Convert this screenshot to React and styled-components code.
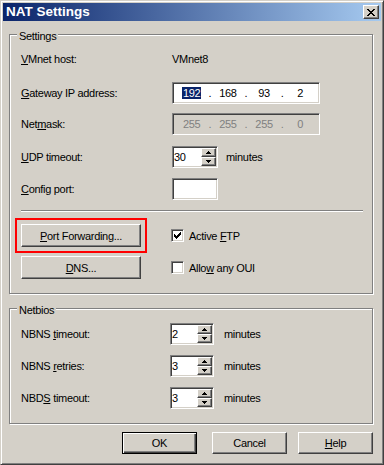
import React from "react";
import styled, { createGlobalStyle, css } from "styled-components";

const Global = createGlobalStyle`
  html, body { margin: 0; padding: 0; background: #D4D0C8; }
  * { box-sizing: border-box; }
`;

const raised = css`
  background: #D4D0C8;
  border: 1px solid;
  border-color: #fff #404040 #404040 #fff;
  box-shadow: inset -1px -1px #808080, inset 1px 1px #D4D0C8;
`;

const sunken = css`
  border: 1px solid;
  border-color: #808080 #fff #fff #808080;
  box-shadow: inset 1px 1px #404040, inset -1px -1px #D4D0C8;
`;

const Win = styled.div`
  width: 384px;
  height: 465px;
  background: #D4D0C8;
  border: 1px solid;
  border-color: #D4D0C8 #404040 #404040 #D4D0C8;
  box-shadow: inset 1px 1px #fff, inset -1px -1px #808080;
  padding: 2px;
  display: flex;
  flex-direction: column;
  font-family: "Liberation Sans", Arial, sans-serif;
  font-size: 11px;
  letter-spacing: -0.3px;
  color: #000;
`;

const TitleBar = styled.div`
  flex: none;
  height: 18px;
  display: flex;
  align-items: center;
  justify-content: space-between;
  padding: 0 2px 0 3px;
  background: linear-gradient(to right, #0A246A, #A6CAF0);
`;

const Title = styled.span`
  color: #fff;
  font-weight: bold;
  font-size: 13.5px;
  letter-spacing: 0;
  line-height: 18px;
`;

const CloseBtn = styled.div`
  ${raised};
  width: 16px;
  height: 14px;
  display: flex;
  align-items: center;
  justify-content: center;
`;

const Body = styled.div`
  flex: 1;
  display: flex;
  flex-direction: column;
  padding: 0 8px 0 6px;
`;

const Group = styled.fieldset`
  margin: ${(p) => p.$mt}px 0 0;
  padding: ${(p) => p.$pt}px 9px 14px 11px;
  min-width: 0;
  border: 1px solid #808080;
  box-shadow: inset 1px 1px #fff, 1px 1px #fff;
`;

const Legend = styled.legend`
  margin-left: -4px;
  padding: 4px 2px 0;
  line-height: 13px;
  background: #D4D0C8;
`;

const FormGrid = styled.div`
  display: grid;
  grid-template-columns: ${(p) => p.$labelW}px 1fr;
  grid-template-rows: ${(p) => p.$rows};
  align-items: start;
`;

const Label = styled.div`
  height: 22px;
  line-height: 22px;
  white-space: nowrap;
`;

const Value = styled.div`
  height: 22px;
  line-height: 22px;
`;

const U = styled.span`
  text-decoration: underline;
  text-underline-offset: 1px;
`;

const IPBox = styled.div`
  ${sunken};
  width: 148px;
  height: 22px;
  padding: 0 2px;
  background: ${(p) => (p.$disabled ? "#D4D0C8" : "#fff")};
  color: ${(p) => (p.$disabled ? "#808080" : "#000")};
  display: grid;
  grid-template-columns: 1fr auto 1fr auto 1fr auto 1fr;
  align-items: center;
  line-height: 18px;
`;

const Octet = styled.span`
  text-align: center;
`;

const Sel = styled.span`
  background: #0A246A;
  color: #fff;
  padding: 0 1px;
  line-height: 12px;
  display: inline-block;
`;

const SpinRow = styled.div`
  display: flex;
  align-items: center;
  gap: ${(p) => p.$gap}px;
  height: 22px;
`;

const SpinBox = styled.div`
  ${sunken};
  width: ${(p) => p.$w}px;
  height: 22px;
  padding: 1px;
  background: #fff;
  display: flex;
`;

const SpinText = styled.div`
  flex: 1;
  padding-left: 0;
  line-height: 18px;
`;

const SpinBtns = styled.div`
  width: 15px;
  display: flex;
  flex-direction: column;
`;

const SpinBtn = styled.div`
  ${raised};
  height: 9px;
  display: flex;
  align-items: center;
  justify-content: center;
`;

const Edit = styled.div`
  ${sunken};
  width: 46px;
  height: 22px;
  background: #fff;
`;

const Separator = styled.div`
  margin-top: 10px;
  height: 2px;
  border-top: 1px solid #808080;
  border-bottom: 1px solid #fff;
`;

const ActionGrid = styled.div`
  margin-top: 12px;
  display: grid;
  grid-template-columns: 120px 1fr;
  grid-template-rows: 23px 23px;
  column-gap: 30px;
  row-gap: 9px;
  align-items: center;
`;

const Btn = styled.div`
  ${raised};
  width: ${(p) => p.$w}px;
  height: ${(p) => p.$h}px;
  display: flex;
  align-items: center;
  justify-content: center;
  margin-right: ${(p) => p.$mr || 0}px;
  ${(p) =>
    p.$default &&
    css`
      border: 1px solid #000;
      box-shadow: inset 1px 1px #fff, inset -1px -1px #404040, inset -2px -2px #808080;
    `}
  ${(p) =>
    p.$highlight &&
    css`
      outline: 2px solid #ff0000;
      outline-offset: 4px;
    `}
`;

const Check = styled.label`
  display: flex;
  align-items: center;
  gap: 5px;
`;

const Box = styled.div`
  ${sunken};
  width: 13px;
  height: 13px;
  background: #fff;
  position: relative;
`;

const Footer = styled.div`
  margin-top: 8px;
  display: flex;
  justify-content: flex-end;
  gap: ${(p) => p.$gap}px;
`;

const CheckMark = () => (
  <svg width="7" height="7" viewBox="0 0 7 7" shapeRendering="crispEdges" style={{ position: "absolute", left: 2, top: 2 }}>
    <path
      fill="#000"
      d="M6 0h1v1h-1zM5 1h2v1h-2zM0 2h1v1h-1zM4 2h3v1h-3zM0 3h2v1h-2zM3 3h3v1h-3zM0 4h5v1h-5zM1 5h3v1h-3zM2 6h1v1h-1z"
    />
  </svg>
);

const Arrow = ({ down }) => (
  <svg width="5" height="3" viewBox="0 0 5 3" shapeRendering="crispEdges">
    {down ? (
      <path fill="#000" d="M0 0h5v1h-5zM1 1h3v1h-3zM2 2h1v1h-1z" />
    ) : (
      <path fill="#000" d="M2 0h1v1h-1zM1 1h3v1h-3zM0 2h5v1h-5z" />
    )}
  </svg>
);

const CloseGlyph = () => (
  <svg width="8" height="7" viewBox="0 0 8 7" shapeRendering="crispEdges">
    <path
      fill="#000"
      d="M0 0h2v1h-2zM6 0h2v1h-2zM1 1h2v1h-2zM5 1h2v1h-2zM2 2h4v1h-4zM3 3h2v1h-2zM2 4h4v1h-4zM1 5h2v1h-2zM5 5h2v1h-2zM0 6h2v1h-2zM6 6h2v1h-2z"
    />
  </svg>
);

const Spinner = ({ value, w, gap }) => (
  <SpinRow $gap={gap}>
    <SpinBox $w={w}>
      <SpinText>{value}</SpinText>
      <SpinBtns>
        <SpinBtn>
          <Arrow />
        </SpinBtn>
        <SpinBtn>
          <Arrow down />
        </SpinBtn>
      </SpinBtns>
    </SpinBox>
    <span>minutes</span>
  </SpinRow>
);

const IP = ({ parts, disabled, selectFirst }) => (
  <IPBox $disabled={disabled}>
    {parts.map((p, i) => (
      <React.Fragment key={i}>
        {i > 0 && <span>.</span>}
        <Octet>{i === 0 && selectFirst ? <Sel>{p}</Sel> : p}</Octet>
      </React.Fragment>
    ))}
  </IPBox>
);

export default function App() {
  return (
    <>
      <Global />
      <Win>
        <TitleBar>
          <Title>NAT Settings</Title>
          <CloseBtn>
            <CloseGlyph />
          </CloseBtn>
        </TitleBar>
        <Body>
          <Group $mt={5} $pt={5}>
            <Legend>Settings</Legend>
            <FormGrid $labelW={151} $rows="34px 31px 33px 32px 22px">
              <Label>
                <U>V</U>Mnet host:
              </Label>
              <Value>VMnet8</Value>
              <Label>
                <U>G</U>ateway IP address:
              </Label>
              <IP parts={["192", "168", "93", "2"]} selectFirst />
              <Label>
                Net<U>m</U>ask:
              </Label>
              <IP parts={["255", "255", "255", "0"]} disabled />
              <Label>
                <U>U</U>DP timeout:
              </Label>
              <Spinner value="30" w={46} gap={8} />
              <Label>
                <U>C</U>onfig port:
              </Label>
              <Edit />
            </FormGrid>
            <Separator />
            <ActionGrid>
              <Btn $w={120} $h={23} $highlight>
                <span>
                  <U>P</U>ort Forwarding...
                </span>
              </Btn>
              <Check>
                <Box>
                  <CheckMark />
                </Box>
                <span>
                  Active <U>F</U>TP
                </span>
              </Check>
              <Btn $w={120} $h={23}>
                <span>
                  <U>D</U>NS...
                </span>
              </Btn>
              <Check>
                <Box />
                <span>
                  Allo<U>w</U> any OUI
                </span>
              </Check>
            </ActionGrid>
          </Group>
          <Group $mt={6} $pt={6}>
            <Legend>Netbios</Legend>
            <FormGrid $labelW={149} $rows="32px 32px 22px">
              <Label>
                NBNS <U>t</U>imeout:
              </Label>
              <Spinner value="2" w={44} gap={10} />
              <Label>
                NBNS <U>r</U>etries:
              </Label>
              <Spinner value="3" w={44} gap={10} />
              <Label>
                NBD<U>S</U> timeout:
              </Label>
              <Spinner value="3" w={44} gap={10} />
            </FormGrid>
          </Group>
          <Footer $gap={11}>
            <Btn $w={75} $h={22} $mr={4} $default>
              OK
            </Btn>
            <Btn $w={75} $h={22}>
              Cancel
            </Btn>
            <Btn $w={75} $h={22}>
              <span>
                <U>H</U>elp
              </span>
            </Btn>
          </Footer>
        </Body>
      </Win>
    </>
  );
}
